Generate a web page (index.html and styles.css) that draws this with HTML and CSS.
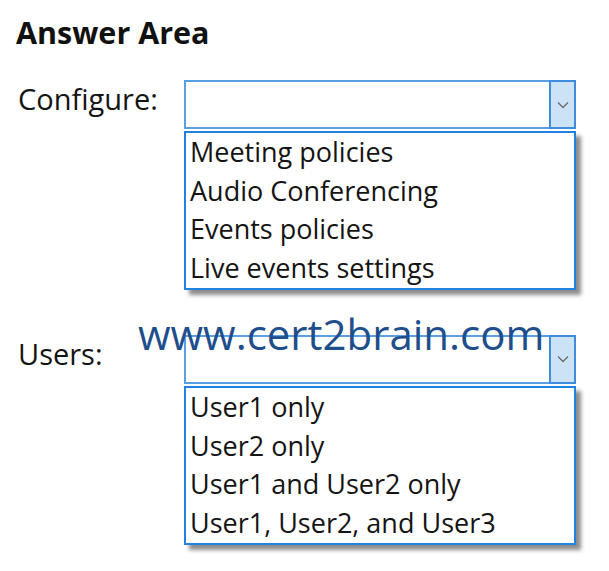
FILE: index.html
```html
<!DOCTYPE html>
<html lang="en">
<head>
    <meta charset="UTF-8">
    <meta name="viewport" content="width=device-width, initial-scale=1.0">
    <title>Answer Area</title>
    <link rel="stylesheet" href="styles.css">
</head>
<body>
    <div class="answer-area">
        <h1>Answer Area</h1>

        <div class="question">
            <span class="label">Configure:</span>
            <div class="dropdown">
                <div class="select-box">
                    <span class="arrow-btn">
                        <svg width="12" height="8" viewBox="0 0 12 8"><polyline points="1,1.5 6,6.5 11,1.5" fill="none" stroke="#6b6b6b" stroke-width="1.3"/></svg>
                    </span>
                </div>
                <ul class="options">
                    <li>Meeting policies</li>
                    <li>Audio Conferencing</li>
                    <li>Events policies</li>
                    <li>Live events settings</li>
                </ul>
            </div>
        </div>

        <div class="question">
            <span class="label">Users:</span>
            <div class="dropdown">
                <div class="select-box">
                    <span class="arrow-btn">
                        <svg width="12" height="8" viewBox="0 0 12 8"><polyline points="1,1.5 6,6.5 11,1.5" fill="none" stroke="#6b6b6b" stroke-width="1.3"/></svg>
                    </span>
                </div>
                <ul class="options">
                    <li>User1 only</li>
                    <li>User2 only</li>
                    <li>User1 and User2 only</li>
                    <li>User1, User2, and User3</li>
                </ul>
            </div>
        </div>

        <div class="watermark">www.cert2brain.com</div>
    </div>
</body>
</html>
```

FILE: styles.css
```css
body {
    margin: 0;
    background-color: white;
    font-family: "Open Sans", Arial, sans-serif;
    color: #141414;
}
.answer-area {
    position: relative;
    padding: 13px 0 0 16px;
}
h1 {
    margin: 0 0 29px 0;
    font-size: 30.5px;
    line-height: 38px;
    font-weight: bold;
    color: #111;
}
.question {
    display: flex;
    align-items: flex-start;
    margin-bottom: 45px;
}
.label {
    width: 166px;
    padding-left: 2px;
    font-size: 29px;
    line-height: 38px;
}
.dropdown {
    width: 392px;
}
.select-box {
    height: 45px;
    border: 2px solid #5a9fe3;
    display: flex;
    justify-content: flex-end;
}
.arrow-btn {
    width: 23px;
    margin: -2px -2px -2px 0;
    background-color: #cce3f7;
    border: 2px solid #3d8ddc;
    display: flex;
    align-items: center;
    justify-content: center;
}
.options {
    list-style: none;
    margin: 2px 0 0 0;
    padding: 0 0 0 4px;
    border: 2px solid #1f82e0;
    box-shadow: 5px 5px 4px rgba(0, 0, 0, 0.45);
}
.options li {
    font-size: 27px;
    line-height: 38.7px;
}
.watermark {
    position: absolute;
    left: 138px;
    top: 309px;
    font-size: 42px;
    line-height: 50px;
    color: #1f4e8c;
}
```
